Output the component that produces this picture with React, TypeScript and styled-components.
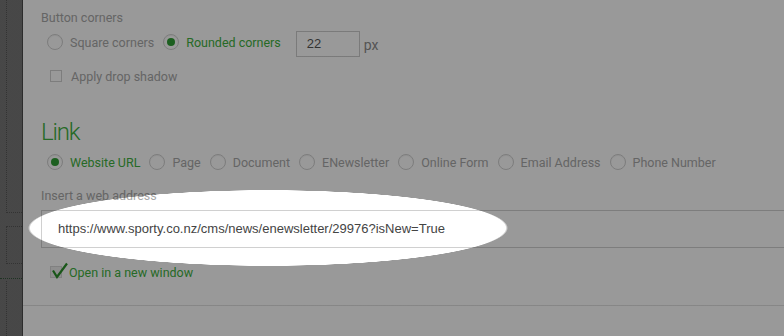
import React from "react";
import styled, { createGlobalStyle } from "styled-components";

const GlobalStyle = createGlobalStyle`
  html, body {
    margin: 0;
    padding: 0;
    background: #fff;
  }
  body {
    font-family: Roboto, "Noto Sans", Arial, sans-serif;
  }
`;

const green = "#40b040";

const Screen = styled.div`
  position: relative;
  display: flex;
  width: 784px;
  height: 336px;
  overflow: hidden;
  background: #fff;
`;

const Sidebar = styled.div`
  flex: none;
  width: 22px;
  display: flex;
  flex-direction: column;
  background: #777;
  border-right: 1px solid #4a4a4a;
`;

const TreeStem = styled.div`
  margin-left: 6px;
  height: 212px;
  border-left: 1px dotted #555;
  border-bottom: 1px dotted #555;
`;

const TreeBox = styled.div`
  margin: 13px 0 0 6px;
  height: 36px;
  border: 1px dotted #555;
  border-right: none;
`;

const TreeDivider = styled.div`
  margin-top: 14px;
  border-top: 1px dotted #33553a;
`;

const TreeTail = styled.div`
  flex: 1;
  margin: 2px 0 0 6px;
  border-left: 1px dotted #555;
`;

const Panel = styled.div`
  flex: 1;
  min-width: 0;
  display: flex;
  flex-direction: column;
`;

const Body = styled.div`
  display: flex;
  flex-direction: column;
  padding: 10px 0 0 18px;
`;

const FieldLabel = styled.div<{ $top?: number }>`
  margin-top: ${(p) => p.$top ?? 0}px;
  font-size: 12.5px;
  line-height: 16px;
  color: #a8a8a8;
`;

const Heading = styled.h2`
  margin: 34px 0 0;
  font-size: 24px;
  line-height: 28px;
  font-weight: 300;
  letter-spacing: -1.2px;
  color: ${green};
`;

const ChoiceRow = styled.div<{ $top: number }>`
  display: flex;
  align-items: flex-start;
  margin: ${(p) => p.$top}px 0 0 6px;
`;

const Option = styled.label<{ $on?: boolean }>`
  display: inline-flex;
  align-items: center;
  gap: 7px;
  height: 22px;
  margin-right: 9px;
  font-size: 12.5px;
  color: ${(p) => (p.$on ? green : "#a8a8a8")};
  white-space: nowrap;
`;

const Radio = styled.span<{ $on?: boolean }>`
  box-sizing: border-box;
  display: grid;
  place-items: center;
  width: 16px;
  height: 16px;
  border-radius: 50%;
  border: 1px solid #cfcfcf;
  box-shadow: inset 0 1px 1px rgba(0, 0, 0, 0.06);
  &::after {
    content: "";
    width: 8px;
    height: 8px;
    border-radius: 50%;
    background: ${(p) => (p.$on ? "#2f9e35" : "transparent")};
  }
`;

const SizeInput = styled.div`
  box-sizing: border-box;
  width: 64px;
  height: 26px;
  margin-left: 6px;
  padding-left: 10px;
  border: 1px solid #ccc;
  font: 13px/24px "Liberation Sans", Arial, sans-serif;
  color: #555;
`;

const Unit = styled.span`
  margin-left: 4px;
  font-size: 14px;
  line-height: 28px;
  color: #8c8c8c;
`;

const CheckRow = styled.label<{ $top: number; $on?: boolean }>`
  display: flex;
  align-items: center;
  gap: ${(p) => (p.$on ? 7 : 9)}px;
  height: 16px;
  margin: ${(p) => p.$top}px 0 0 9px;
  font-size: 12.5px;
  color: ${(p) => (p.$on ? green : "#a8a8a8")};
`;

const Box = styled.span<{ $on?: boolean }>`
  position: relative;
  box-sizing: border-box;
  width: 12px;
  height: 12px;
  border: 1px solid ${(p) => (p.$on ? "#d6d6d6" : "#d0d0d0")};
  background: ${(p) => (p.$on ? "#ececec" : "transparent")};
`;

const Tick = styled.svg`
  position: absolute;
  left: -1px;
  top: -5px;
  width: 18px;
  height: 18px;
  overflow: visible;
`;

const UrlInput = styled.div`
  box-sizing: border-box;
  width: 760px;
  height: 38px;
  margin-top: 6px;
  padding-left: 16px;
  border: 1px solid #d0d0d0;
  border-right: none;
  font: 13px/36px "Liberation Sans", Arial, sans-serif;
  color: #444;
  white-space: nowrap;
`;

const Rule = styled.div`
  margin-top: 25px;
  border-top: 1px solid #e0e0e0;
`;

const Spotlight = styled.div`
  position: absolute;
  inset: 0;
  pointer-events: none;
  background: radial-gradient(
    240px 38px at 268px 228px,
    rgba(0, 0, 0, 0) 99%,
    rgba(0, 0, 0, 0.4) 100%
  );
`;

const linkTypes = [
  "Website URL",
  "Page",
  "Document",
  "ENewsletter",
  "Online Form",
  "Email Address",
  "Phone Number",
];

export default function App() {
  return (
    <Screen>
      <GlobalStyle />
      <Sidebar>
        <TreeStem />
        <TreeBox />
        <TreeDivider />
        <TreeTail />
      </Sidebar>
      <Panel>
        <Body>
          <FieldLabel>Button corners</FieldLabel>
          <ChoiceRow $top={5}>
            <Option>
              <Radio />
              Square corners
            </Option>
            <Option $on>
              <Radio $on />
              Rounded corners
            </Option>
            <SizeInput>22</SizeInput>
            <Unit>px</Unit>
          </ChoiceRow>
          <CheckRow $top={9}>
            <Box />
            Apply drop shadow
          </CheckRow>

          <Heading>Link</Heading>
          <ChoiceRow $top={5}>
            {linkTypes.map((t, i) => (
              <Option key={t} $on={i === 0}>
                <Radio $on={i === 0} />
                {t}
              </Option>
            ))}
          </ChoiceRow>
          <FieldLabel $top={15}>Insert a web address</FieldLabel>
          <UrlInput>https://www.sporty.co.nz/cms/news/enewsletter/29976?isNew=True</UrlInput>
          <CheckRow $top={16} $on>
            <Box $on>
              <Tick viewBox="0 0 18 18">
                <path d="M3 8.5 L7 15 L17 1.5" fill="none" stroke="#2a902a" strokeWidth="2.2" />
              </Tick>
            </Box>
            Open in a new window
          </CheckRow>
        </Body>
        <Rule />
      </Panel>
      <Spotlight />
    </Screen>
  );
}
